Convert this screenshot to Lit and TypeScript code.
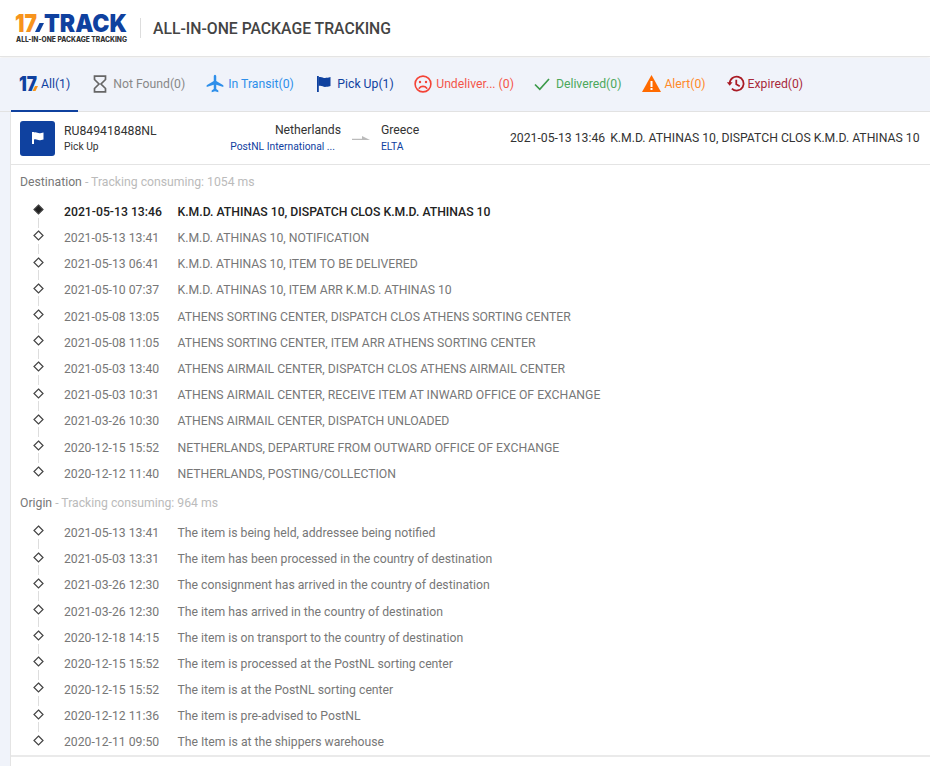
import { LitElement, html, css, svg } from "lit";
import { customElement } from "lit/decorators.js";

const dest: [string, string][] = [
  ["2021-05-13 13:46", "K.M.D. ATHINAS 10, DISPATCH CLOS K.M.D. ATHINAS 10"],
  ["2021-05-13 13:41", "K.M.D. ATHINAS 10, NOTIFICATION"],
  ["2021-05-13 06:41", "K.M.D. ATHINAS 10, ITEM TO BE DELIVERED"],
  ["2021-05-10 07:37", "K.M.D. ATHINAS 10, ITEM ARR K.M.D. ATHINAS 10"],
  ["2021-05-08 13:05", "ATHENS SORTING CENTER, DISPATCH CLOS ATHENS SORTING CENTER"],
  ["2021-05-08 11:05", "ATHENS SORTING CENTER, ITEM ARR ATHENS SORTING CENTER"],
  ["2021-05-03 13:40", "ATHENS AIRMAIL CENTER, DISPATCH CLOS ATHENS AIRMAIL CENTER"],
  ["2021-05-03 10:31", "ATHENS AIRMAIL CENTER, RECEIVE ITEM AT INWARD OFFICE OF EXCHANGE"],
  ["2021-03-26 10:30", "ATHENS AIRMAIL CENTER, DISPATCH UNLOADED"],
  ["2020-12-15 15:52", "NETHERLANDS, DEPARTURE FROM OUTWARD OFFICE OF EXCHANGE"],
  ["2020-12-12 11:40", "NETHERLANDS, POSTING/COLLECTION"],
];
const origin: [string, string][] = [
  ["2021-05-13 13:41", "The item is being held, addressee being notified"],
  ["2021-05-03 13:31", "The item has been processed in the country of destination"],
  ["2021-03-26 12:30", "The consignment has arrived in the country of destination"],
  ["2021-03-26 12:30", "The item has arrived in the country of destination"],
  ["2020-12-18 14:15", "The item is on transport to the country of destination"],
  ["2020-12-15 15:52", "The item is processed at the PostNL sorting center"],
  ["2020-12-15 15:52", "The item is at the PostNL sorting center"],
  ["2020-12-12 11:36", "The item is pre-advised to PostNL"],
  ["2020-12-11 09:50", "The Item is at the shippers warehouse"],
];

const flag = (c: string) => svg`<svg width="16" height="18" viewBox="0 0 16 18"><path d="M1 1h1.800v16H1z" fill="${c}"/><path d="M2.500 2.200c3-1 4.500.8 6.500.8 1.500 0 3-.3 5.500-.9v8.900c-2.500.6-4 .9-5.500.9-2 0-3.500-1.700-6.500-.9z" fill="${c}"/></svg>`;

const icons: Record<string, unknown> = {
  all: svg`<svg class="mark" width="20" height="16" viewBox="0 0 20 16"><text x="0" y="15" font-family="Inter, sans-serif" font-weight="900" font-size="19.500" fill="#0f419f" textLength="18" lengthAdjust="spacingAndGlyphs">17</text><path d="M13.500 15l2.500-5h3l-2.500 5z" fill="#f7941d"/></svg>`,
  hour: svg`<svg width="14" height="18" viewBox="0 0 14 18" fill="none" stroke="#666" stroke-width="1.700"><path d="M1.500 1.200h11v3.300L8 9l4.500 4.500v3.300h-11v-3.300L6 9 1.500 4.500z"/></svg>`,
  plane: svg`<svg width="20" height="20" viewBox="0 0 24 24"><path d="M22 15.500v-2l-8.500-5V3c0-.9-.7-2-1.500-2s-1.500 1.100-1.500 2v5.500L2 13.500v2l8.500-2.700V18l-2.500 1.800V22l4-1.200 4 1.200v-2.200L13.500 18v-5.200z" fill="#2e8fea"/></svg>`,
  flag: flag("#0f419f"),
  sad: svg`<svg width="18" height="18" viewBox="0 0 18 18" fill="none" stroke="#f44336" stroke-width="1.600"><circle cx="9" cy="9" r="7.900"/><path d="M5.200 13.200c1.800-2.400 5.800-2.400 7.600 0" stroke-linecap="round"/><circle cx="6" cy="7" r="1.200" fill="#f44336" stroke="none"/><circle cx="12" cy="7" r="1.200" fill="#f44336" stroke="none"/></svg>`,
  check: svg`<svg width="16" height="14" viewBox="0 0 16 14" fill="none" stroke="#3c9a4a" stroke-width="1.700"><path d="M1 7.500l4.800 4.800L15 2"/></svg>`,
  alert: svg`<svg width="19" height="17" viewBox="0 0 19 17"><path d="M9.500 0L19 17H0z" fill="#ff6a00"/><path d="M8.500 6h2v6h-2zM8.500 13h2v2h-2z" fill="#fff"/></svg>`,
  expired: svg`<svg width="19" height="17" viewBox="0 0 24 22" fill="none" stroke="#a91b25" stroke-width="2.300"><path d="M4.500 11a9 9 0 1 1 2.800 6.600"/><path d="M13 6v6l4.500 2.500"/><path d="M0.800 9.500h7.400L4.500 14z" fill="#a91b25" stroke="none"/></svg>`,
};

const tabs = [
  ["all", "All(1)", "#0f419f", "t-all"],
  ["hour", "Not Found(0)", "#888", "t-hour"],
  ["plane", "In Transit(0)", "#2e8fea", "t-plane"],
  ["flag", "Pick Up(1)", "#0f419f", "t-flag"],
  ["sad", "Undeliver... (0)", "#f4564a", "t-sad"],
  ["check", "Delivered(0)", "#4ca85a", "t-check"],
  ["alert", "Alert(0)", "#ff8a2a", "t-alert"],
  ["expired", "Expired(0)", "#a92a3a", "t-expired"],
];

@customElement("app-root")
export class AppRoot extends LitElement {
  static styles = css`
    :host { display: block; width: 930px; height: 766px; overflow: hidden; background: #fff; font-family: Roboto, "Liberation Sans", sans-serif; font-size: 12.230px; color: #666; }
    .top { height: 57px; display: flex; align-items: center; padding-left: 15px; box-sizing: border-box; border-bottom: 1px solid #e4e4e4; box-shadow: 0 1px 3px rgba(0,0,0,.08); position: relative; }
    .logo { width: 125px; height: 34px; display: block; flex: none; overflow: visible; }
    .vr { width: 1px; height: 20px; background: #ddd; }
    h1 { margin: 0 0 0 12px; font-size: 15.750px; font-weight: 500; color: #444; white-space: nowrap; }
    .tabs { height: 54px; background: #f0f3fa; display: flex; align-items: center; border-bottom: 1px solid #e2e2e2; padding: 0 0 2px 19px; box-sizing: border-box; position: relative; margin-top: 1px; }
    .tab { display: flex; align-items: center; white-space: nowrap; }
    .tab.t-all { gap: 2px; margin-right: 22.500px; }
    .tab.t-hour { gap: 6.500px; margin-right: 20px; }
    .tab.t-plane { gap: 3px; margin-right: 22.500px; }
    .tab.t-flag { gap: 5px; margin-right: 20.500px; }
    .tab.t-sad { gap: 4px; margin-right: 20px; }
    .tab.t-check { gap: 6px; margin-right: 21px; }
    .tab.t-alert { gap: 3px; margin-right: 20px; }
    .tab.t-expired { gap: 3px; }
    .tab svg { display: block; flex: none; overflow: visible; }
    .under { position: absolute; left: 11px; bottom: -1px; width: 67px; height: 2px; background: #0f419f; }
    .body { display: flex; }
    .gutter { width: 10px; flex: none; background: #f0f3fa; height: 660px; border-right: 1px solid #e4e4e4; }
    .main { flex: 1; min-width: 0; }
    .summary { height: 53px; display: flex; align-items: center; border-bottom: 1px solid #e4e4e4; box-sizing: border-box; padding-left: 9px; }
    .badge { width: 35px; height: 35px; border-radius: 3px; background: #0f419f; display: flex; align-items: center; justify-content: center; flex: none; margin-right: 9px; }
    .no { width: 150px; flex: none; }
    .l1 { color: #333; line-height: 16px; }
    .l2 { color: #333; line-height: 15px; font-size: 10.300px; }
    .from { width: 127px; text-align: right; flex: none; }
    .from .l1, .to .l1 { line-height: 17px; }
    .from .l2 { padding-right: 6px; }
    .link { color: #0f419f; }
    .arrow { width: 40px; flex: none; display: flex; justify-content: center; }
    .to { width: 129px; flex: none; }
    .latest { color: #333; white-space: nowrap; }
    .latest span { margin-right: 5px; }
    .sec { height: 33.800px; padding-left: 9px; display: flex; align-items: center; color: #777; }
    .sec.second { height: 33px; }
    .sec em { font-style: normal; color: #bbb; white-space: pre; }
    .list { display: flex; flex-direction: column; }
    .row { height: 26.200px; display: flex; align-items: center; white-space: nowrap; color: #777; }
    .row.cur { color: #222; font-weight: 500; }
    .dot { width: 53px; flex: none; position: relative; align-self: stretch; }
    .dot svg { position: absolute; left: 22px; top: 5.500px; }
    .dot i { position: absolute; left: 27px; top: 19px; width: 1px; height: 10px; background: #ddd; }
    .row:last-child .dot i { display: none; }
    .time { width: 113.500px; flex: none; }
    .end { height: 2px; background: #eaeaea; margin-top: -.6px; }
  `;

  private dia(filled: boolean) {
    return svg`<svg width="11" height="11" viewBox="0 0 11 11"><path d="M5.500 1L10 5.500 5.500 10 1 5.500z" fill="${filled ? "#222" : "#fff"}" stroke="#444" stroke-width="1.200"/></svg>`;
  }

  private rows(items: [string, string][], first: boolean) {
    return html`<div class="list">${items.map(
      ([t, x], i) => html`<div class="row ${first && i === 0 ? "cur" : ""}">
        <div class="dot">${this.dia(first && i === 0)}<i></i></div>
        <div class="time">${t}</div><div>${x}</div>
      </div>`
    )}</div>`;
  }

  render() {
    return html`
      <div class="top">
        <svg class="logo" viewBox="0 0 125 34">
          <text x="0" y="21" font-family="Inter, sans-serif" font-weight="900" font-size="24.700" fill="#f7941d" textLength="22" lengthAdjust="spacingAndGlyphs">17</text>
          <path d="M20 21l4.500-9H29l-4.500 9z" fill="#0f419f"/>
          <text x="29" y="21" font-family="Inter, sans-serif" font-weight="900" font-size="24.700" fill="#0f419f" textLength="83" lengthAdjust="spacingAndGlyphs">TRACK</text>
          <text x="1" y="31" font-family="Inter, sans-serif" font-weight="800" font-size="7" fill="#333" textLength="111" lengthAdjust="spacingAndGlyphs">ALL-IN-ONE PACKAGE TRACKING</text>
        </svg>
        <div class="vr"></div>
        <h1>ALL-IN-ONE PACKAGE TRACKING</h1>
      </div>
      <div class="tabs">
        ${tabs.map(([k, label, c, cls]) => html`<div class="tab ${cls}" style="color:${c}">${icons[k]}<span>${label}</span></div>`)}
        <div class="under"></div>
      </div>
      <div class="body">
        <div class="gutter"></div>
        <div class="main">
          <div class="summary">
            <div class="badge"><svg width="14" height="14" viewBox="0 0 14 14"><path d="M1 1h2v12H1z" fill="#fff"/><path d="M3 1.500c2.500-.7 3.500.7 5.500.7 1 0 2.500-.3 4-.7v7c-1.500.4-3 .7-4 .7-2 0-3-1.400-5.500-.7z" fill="#fff"/></svg></div>
            <div class="no"><div class="l1">RU849418488NL</div><div class="l2">Pick Up</div></div>
            <div class="from"><div class="l1">Netherlands</div><div class="l2 link">PostNL International ...</div></div>
            <div class="arrow"><svg width="18" height="6" viewBox="0 0 18 6"><path d="M0 5h18L10 1v2.800H0z" fill="#bbb"/></svg></div>
            <div class="to"><div class="l1">Greece</div><div class="l2 link">ELTA</div></div>
            <div class="latest"><span>2021-05-13 13:46</span>K.M.D. ATHINAS 10, DISPATCH CLOS K.M.D. ATHINAS 10</div>
          </div>
          <div class="sec">Destination<em> - Tracking consuming: 1054 ms</em></div>
          ${this.rows(dest, true)}
          <div class="sec second">Origin<em> - Tracking consuming: 964 ms</em></div>
          ${this.rows(origin, false)}
          <div class="end"></div>
        </div>
      </div>
    `;
  }
}
